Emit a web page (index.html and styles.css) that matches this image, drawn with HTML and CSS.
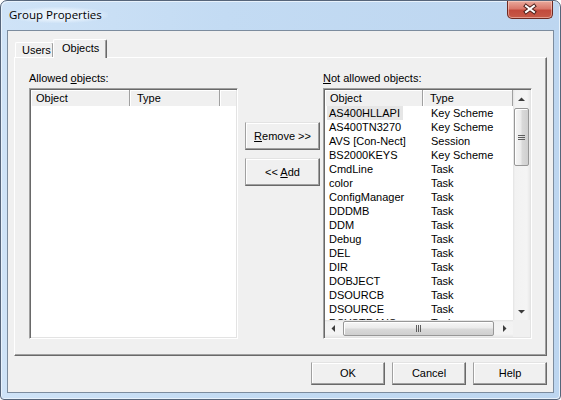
FILE: index.html
```html
<!DOCTYPE html>
<html>
<head>
<meta charset="utf-8">
<link rel="stylesheet" href="styles.css">
</head>
<body>
<div class="window">
  <div class="titlebar">
    <span class="title">Group Properties</span>
    <div class="close">
      <svg width="46" height="18" viewBox="0 0 46 18">
        <path d="M19 6 L27 12 M27 6 L19 12" stroke="#4a1e19" stroke-width="4" stroke-linecap="square" fill="none"/>
        <path d="M19 6 L27 12 M27 6 L19 12" stroke="#ffffff" stroke-width="2" stroke-linecap="square" fill="none"/>
      </svg>
    </div>
  </div>
  <div class="client">
    <div class="tabs">
      <div class="tab">Users</div>
      <div class="tab active">Objects</div>
    </div>
    <div class="panel">
      <div class="panel-grid">
        <div class="lbl lbl-left">Allowed <u>o</u>bjects:</div>
        <div class="lbl lbl-right"><u>N</u>ot allowed objects:</div>
        <div class="listview lv-left">
          <div class="hdr hdr-left">
            <div class="hc hc1">Object</div>
            <div class="hc hc2">Type</div>
            <div class="hc hc3"></div>
          </div>
          <div class="lv-body"></div>
        </div>
        <div class="mid">
          <div class="btn btn-mid"><u>R</u>emove &gt;&gt;</div>
          <div class="btn btn-mid">&lt;&lt; <u>A</u>dd</div>
        </div>
        <div class="listview lv-right">
          <div class="hdr hdr-right">
            <div class="hc hc1">Object</div>
            <div class="hc hc2">Type</div>
          </div>
          <div class="vscroll">
            <div class="sb-btn"><svg width="17" height="17" viewBox="0 0 17 17"><path d="M5 11 L12 11 L8.5 7.5 Z" fill="#3c3c3c"/></svg></div>
            <div class="vthumb"><span class="grip-h"></span></div>
            <div class="vtrack"></div>
            <div class="sb-btn"><svg width="17" height="17" viewBox="0 0 17 17"><path d="M5 7 L12 7 L8.5 10.5 Z" fill="#3c3c3c"/></svg></div>
          </div>
          <div class="rows">
            <div class="row sel"><div class="c1"><span>AS400HLLAPI</span></div><div class="c2">Key Scheme</div></div>
            <div class="row"><div class="c1"><span>AS400TN3270</span></div><div class="c2">Key Scheme</div></div>
            <div class="row"><div class="c1"><span>AVS [Con-Nect]</span></div><div class="c2">Session</div></div>
            <div class="row"><div class="c1"><span>BS2000KEYS</span></div><div class="c2">Key Scheme</div></div>
            <div class="row"><div class="c1"><span>CmdLine</span></div><div class="c2">Task</div></div>
            <div class="row"><div class="c1"><span>color</span></div><div class="c2">Task</div></div>
            <div class="row"><div class="c1"><span>ConfigManager</span></div><div class="c2">Task</div></div>
            <div class="row"><div class="c1"><span>DDDMB</span></div><div class="c2">Task</div></div>
            <div class="row"><div class="c1"><span>DDM</span></div><div class="c2">Task</div></div>
            <div class="row"><div class="c1"><span>Debug</span></div><div class="c2">Task</div></div>
            <div class="row"><div class="c1"><span>DEL</span></div><div class="c2">Task</div></div>
            <div class="row"><div class="c1"><span>DIR</span></div><div class="c2">Task</div></div>
            <div class="row"><div class="c1"><span>DOBJECT</span></div><div class="c2">Task</div></div>
            <div class="row"><div class="c1"><span>DSOURCB</span></div><div class="c2">Task</div></div>
            <div class="row"><div class="c1"><span>DSOURCE</span></div><div class="c2">Task</div></div>
            <div class="row"><div class="c1"><span>DSYSTRANS</span></div><div class="c2">Task</div></div>
          </div>
          <div class="hscroll">
            <div class="sb-btn"><svg width="17" height="17" viewBox="0 0 17 17"><path d="M10 5 L10 12 L6.5 8.5 Z" fill="#3c3c3c"/></svg></div>
            <div class="hthumb"><span class="grip-v"></span></div>
            <div class="htrack"></div>
            <div class="sb-btn"><svg width="17" height="17" viewBox="0 0 17 17"><path d="M7 5 L7 12 L10.5 8.5 Z" fill="#3c3c3c"/></svg></div>
          </div>
          <div class="corner"></div>
        </div>
      </div>
    </div>
    <div class="footer">
      <div class="btn btn-foot">OK</div>
      <div class="btn btn-foot">Cancel</div>
      <div class="btn btn-foot">Help</div>
    </div>
  </div>
</div>
</body>
</html>
```
FILE: styles.css
```css
html, body {
  margin: 0;
  padding: 0;
  background: #ffffff;
}
body {
  font-family: "Liberation Sans", Arial, sans-serif;
  font-size: 11px;
  color: #000;
}
.window {
  width: 561px;
  height: 400px;
  box-sizing: border-box;
  border: 1px solid #56657a;
  border-radius: 7px 7px 4px 4px;
  background: linear-gradient(to right, #cfe3f7 0%, #c3dbf3 40%, #bdd6f0 100%);
  box-shadow: inset 1px 1px 0 #e8f2fc, inset -1px -1px 0 #e8f2fc;
  padding: 0 6px 6px 6px;
  display: flex;
  flex-direction: column;
  overflow: hidden;
}
.titlebar {
  height: 29px;
  display: flex;
  justify-content: space-between;
  align-items: flex-start;
  flex: none;
}
.title {
  font-family: "Open Sans", "Noto Sans", sans-serif;
  font-size: 11.5px;
  line-height: 16px;
  margin: 6px 0 0 2px;
  padding: 0 6px 0 0;
  color: #000;
  background: radial-gradient(ellipse at center, rgba(235,244,253,0.9) 40%, rgba(235,244,253,0) 75%);
}
.close {
  width: 46px;
  height: 18px;
  margin-right: 1px;
  box-sizing: border-box;
  border: 1px solid #6e2a22;
  border-top: none;
  border-radius: 0 0 5px 5px;
  background: linear-gradient(#e9a99c 0%, #d9786b 45%, #c24a3c 55%, #c75a48 100%);
  box-shadow: inset 0 0 0 1px rgba(255,220,210,0.5);
}
.close svg {
  display: block;
  margin: -1px 0 0 -1px;
}
.client {
  flex: 1;
  border: 1px solid #7c8c9e;
  background: #f0f0f0;
  display: flex;
  flex-direction: column;
}
.tabs {
  display: flex;
  align-items: flex-end;
  height: 18px;
  margin-top: 8px;
  padding-left: 7px;
  flex: none;
}
.tab {
  box-sizing: border-box;
  height: 15px;
  width: 39px;
  padding-left: 6px;
  line-height: 14px;
  border-top: 1px solid #ffffff;
  border-left: 1px solid #ffffff;
  border-right: 1px solid #696969;
  border-radius: 2px 2px 0 0;
  box-shadow: inset -1px 0 0 #a0a0a0;
  background: #f0f0f0;
}
.tab.active {
  height: 19px;
  width: 54px;
  margin-left: -1px;
  margin-bottom: -1px;
  padding-left: 8px;
  line-height: 16px;
  position: relative;
  z-index: 1;
}
.panel {
  box-sizing: border-box;
  height: 299px;
  margin: 0 6px 0 6px;
  border: 1px solid;
  border-color: #ffffff #696969 #696969 #ffffff;
  box-shadow: inset -1px -1px 0 #a0a0a0;
  padding: 12px 0 0 14px;
  flex: none;
}
.panel-grid {
  display: grid;
  grid-template-columns: 209px 7px 75px 3px 209px;
  grid-template-rows: 18px 251px;
}
.lbl {
  line-height: 14px;
  padding-top: 1px;
  white-space: nowrap;
}
.lbl-left { grid-column: 1; grid-row: 1; }
.lbl-right { grid-column: 5; grid-row: 1; }
.listview {
  box-sizing: border-box;
  border: 1px solid;
  border-color: #a0a0a0 #ffffff #ffffff #a0a0a0;
  background: #ffffff;
}
.lv-left {
  grid-column: 1;
  grid-row: 2;
  display: flex;
  flex-direction: column;
  box-shadow: inset 1px 1px 0 #696969, inset -1px -1px 0 #e3e3e3;
  padding: 1px;
}
.lv-body {
  flex: 1;
  background: #fff;
}
.hdr {
  display: grid;
  height: 16px;
  flex: none;
}
.hdr-left {
  grid-template-columns: 99px 90px 1fr;
}
.hdr-right {
  grid-column: 1;
  grid-row: 1;
  grid-template-columns: 98px 90px;
}
.hc {
  box-sizing: border-box;
  background: #f0f0f0;
  border-right: 1px solid #a0a0a0;
  border-bottom: 1px solid #a0a0a0;
  box-shadow: inset 1px 1px 0 #ffffff;
  line-height: 16px;
  padding-left: 5px;
  white-space: nowrap;
}
.hc2 { padding-left: 7px; }
.hc3 { border-right: none; }
.mid {
  grid-column: 3;
  grid-row: 2;
  padding-top: 34px;
  display: flex;
  flex-direction: column;
  gap: 8px;
}
.btn {
  box-sizing: border-box;
  background: #f0f0f0;
  border: 1px solid;
  border-color: #e3e3e3 #696969 #696969 #a0a0a0;
  box-shadow: inset -1px -1px 0 #a0a0a0, inset 1px 1px 0 #ffffff;
  text-align: center;
  white-space: nowrap;
}
.btn-mid {
  height: 28px;
  line-height: 26px;
}
.lv-right {
  grid-column: 5;
  grid-row: 2;
  display: grid;
  grid-template-columns: 188px 17px;
  grid-template-rows: 16px 214px 17px;
  box-shadow: inset 1px 1px 0 #696969, inset -1px -1px 0 #e3e3e3;
  padding: 1px;
}
.rows {
  grid-column: 1;
  grid-row: 2;
  overflow: hidden;
  background: #fff;
}
.row {
  display: grid;
  grid-template-columns: 98px 90px;
  height: 14px;
  line-height: 14px;
  white-space: nowrap;
}
.row .c1 { padding-left: 2px; }
.row .c1 span { padding: 0 3px 0 2px; display: inline-block; }
.row.sel .c1 span { background: #e6e6e6; }
.row .c2 { padding-left: 8px; }
.vscroll {
  grid-column: 2;
  grid-row: 1 / 3;
  display: flex;
  flex-direction: column;
  background: linear-gradient(to right, #e3e3e3 0px, #f2f2f2 2px, #f4f4f4 14px, #e8e8e8 17px);
}
.sb-btn {
  width: 17px;
  height: 17px;
  flex: none;
}
.sb-btn svg { display: block; }
.vthumb {
  box-sizing: border-box;
  height: 58px;
  margin: 1px 1px 0 1px;
  border: 1px solid #979797;
  border-radius: 2px;
  background: linear-gradient(to right, #f6f6f6 0%, #ebebeb 45%, #d9d9d9 55%, #cfcfcf 100%);
  box-shadow: inset 1px 1px 0 #ffffff;
  display: flex;
  align-items: center;
  justify-content: center;
  flex: none;
}
.grip-h {
  width: 7px;
  height: 5px;
  background: repeating-linear-gradient(#5e5e5e 0 1px, transparent 1px 2px);
}
.vtrack { flex: 1; }
.hscroll {
  grid-column: 1;
  grid-row: 3;
  display: flex;
  background: linear-gradient(#e3e3e3 0px, #f2f2f2 2px, #f4f4f4 14px, #e8e8e8 17px);
}
.hthumb {
  box-sizing: border-box;
  width: 151px;
  margin: 1px 0 1px 1px;
  border: 1px solid #979797;
  border-radius: 2px;
  background: linear-gradient(#f6f6f6 0%, #ebebeb 45%, #d9d9d9 55%, #cfcfcf 100%);
  box-shadow: inset 1px 1px 0 #ffffff;
  display: flex;
  align-items: center;
  justify-content: center;
  flex: none;
}
.grip-v {
  width: 5px;
  height: 7px;
  background: repeating-linear-gradient(to right, #5e5e5e 0 1px, transparent 1px 2px);
}
.htrack { flex: 1; }
.corner {
  grid-column: 2;
  grid-row: 3;
  background: #f0f0f0;
}
.footer {
  display: flex;
  justify-content: flex-end;
  gap: 7px;
  margin-top: 6px;
  padding-right: 6px;
}
.btn-foot {
  width: 74px;
  height: 23px;
  line-height: 21px;
}
```
